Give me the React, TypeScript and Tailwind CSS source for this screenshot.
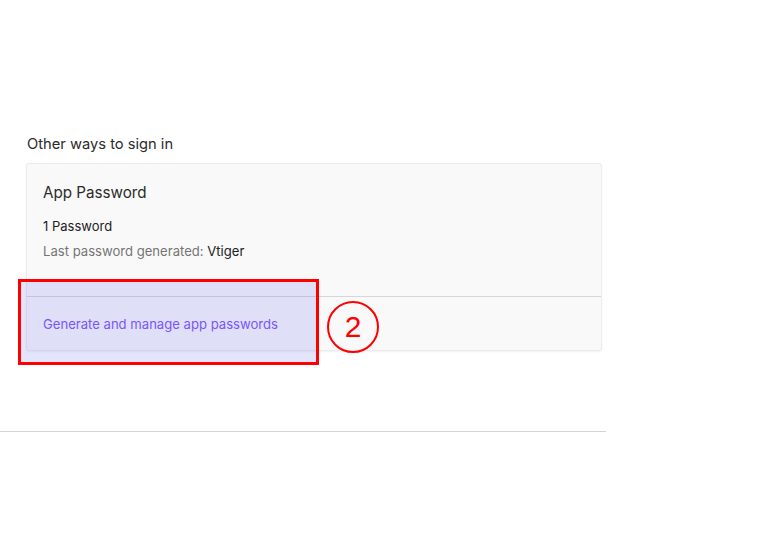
export default function App() {
  return (
    <div className="relative w-[784px] h-[557px] bg-white" style={{ fontFamily: "Inter, 'Noto Sans', sans-serif" }}>
      <div className="w-[606px] pt-[134px]">
        <div className="pl-[26px] pr-[4px]">
          <div className="text-[14.7px] leading-[20px] text-[#2b2b2b] pl-[1px]">Other ways to sign in</div>
          <div className="mt-[9px] border border-[#ececec] rounded-[3px] bg-[#f9f9f9] shadow-[0_1px_2px_rgba(0,0,0,0.06)]">
            <div className="h-[132px] px-[16px] pt-[19px]">
              <div className="text-[15.2px] leading-[20px] text-[#2b2b2b]">App Password</div>
              <div className="mt-[14px] text-[13px] leading-[18px] text-[#222]">1 Password</div>
              <div className="mt-[7px] text-[13.1px] leading-[18px] text-[#757575]">
                Last password generated: <span className="text-[#222]">Vtiger</span>
              </div>
            </div>
            <div className="border-t border-[#d6d6d6] h-[54px] px-[16px] flex items-center">
              <span className="text-[13.1px] pt-[2px] text-[#7c4dff]">Generate and manage app passwords</span>
            </div>
          </div>
        </div>
        <div className="mt-[80px] border-t border-[#d4d4d4]" />
      </div>
      <div className="absolute left-[18px] top-[279px] w-[301px] h-[86px] border-[3px] border-[#ff0000] bg-[rgba(120,120,245,0.2)]" />
      <div className="absolute left-[327px] top-[301px] w-[52px] h-[52px] rounded-full border-2 border-[#ff0000] flex items-center justify-center text-[#ff0000] text-[30px] leading-none" style={{ fontFamily: "'Liberation Sans', Arial, sans-serif" }}>
        2
      </div>
    </div>
  );
}
